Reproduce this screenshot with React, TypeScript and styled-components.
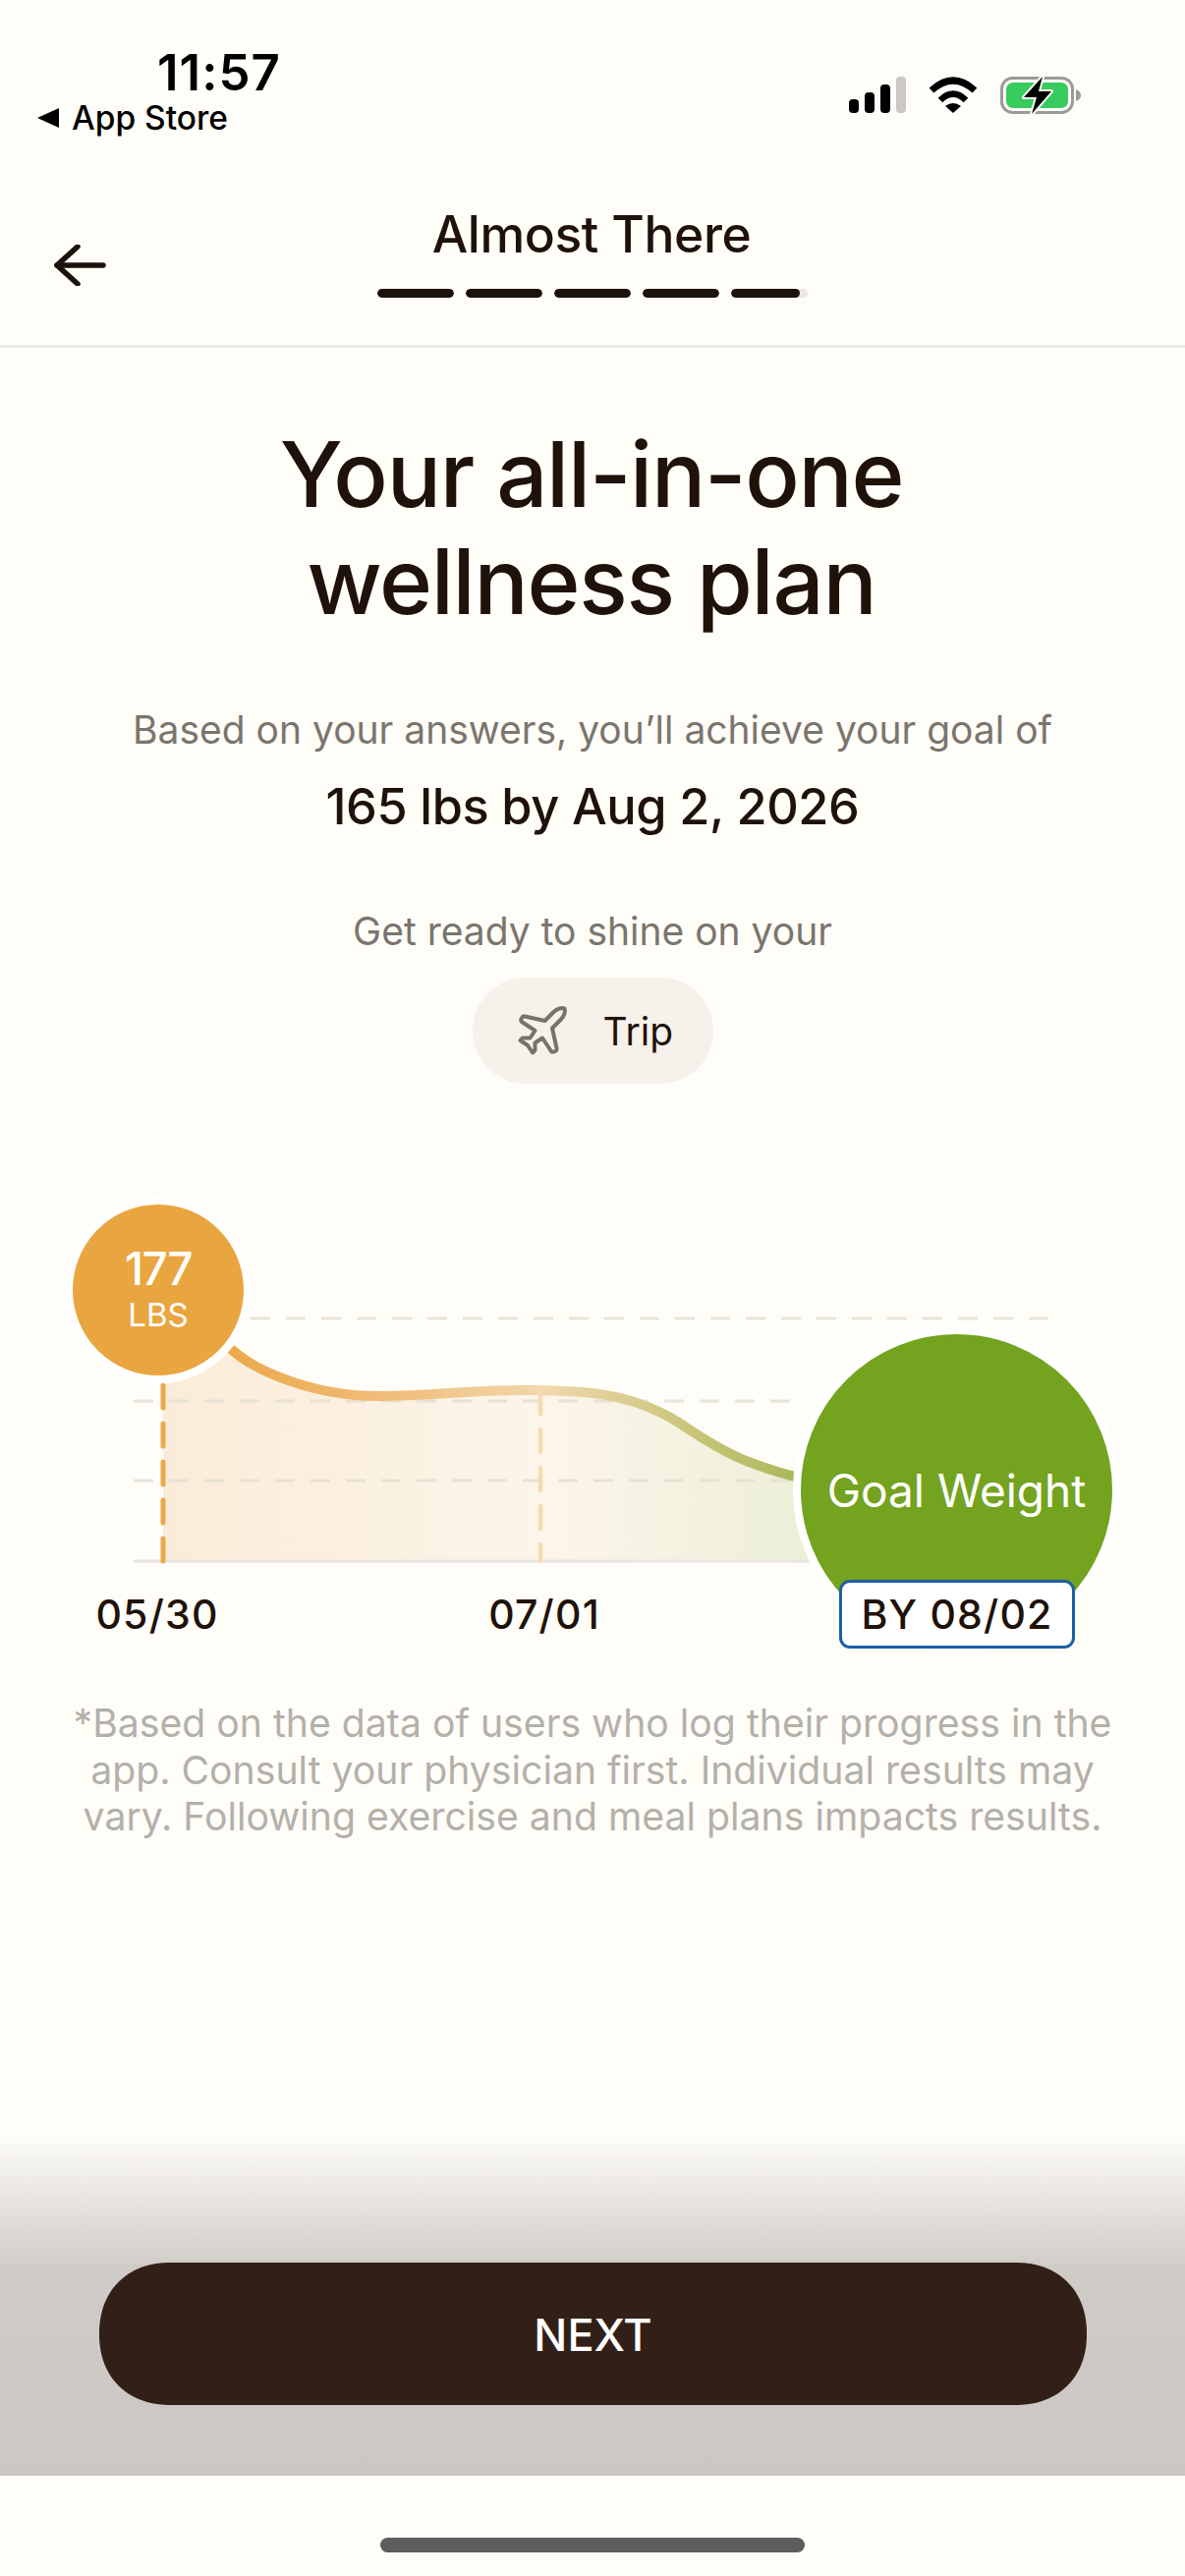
import React from 'react';
import styled, { createGlobalStyle } from 'styled-components';
import { Plane } from 'lucide-react';

const Global = createGlobalStyle`
  html, body { margin: 0; padding: 0; background: #fffdf7; }
  * { box-sizing: border-box; }
`;

const Page = styled.div`
  width: 1206px;
  height: 2622px;
  background: #fffdf7;
  display: flex;
  flex-direction: column;
  overflow: hidden;
  font-family: Inter, "Liberation Sans", sans-serif;
  color: #1f120a;
`;

const StatusBar = styled.div`
  height: 150px;
  padding: 47px 106px 0 38px;
  display: flex;
  justify-content: space-between;
  color: #000;
`;

const StatusLeft = styled.div`
  display: flex;
  flex-direction: column;
`;

const Clock = styled.div`
  margin-left: 122px;
  font-size: 51px;
  line-height: 54px;
  font-weight: 600;
  letter-spacing: 1px;
`;

const BackLink = styled.div`
  display: flex;
  align-items: center;
  gap: 13px;
  font-size: 33.5px;
  line-height: 38px;
  font-weight: 500;
`;

const Triangle = styled.span`
  width: 0;
  height: 0;
  border-top: 10px solid transparent;
  border-bottom: 10px solid transparent;
  border-right: 22px solid #000;
`;

const StatusIcons = styled.div`
  display: flex;
  align-items: flex-start;
  padding-top: 31px;
  gap: 23px;
`;

const NavBar = styled.div`
  height: 204px;
  display: grid;
  grid-template-columns: 180px 1fr 180px;
  border-bottom: 3px solid #ebe9e3;
`;

const BackButton = styled.div`
  padding: 99px 0 0 55px;
`;

const NavCenter = styled.div`
  display: flex;
  flex-direction: column;
  align-items: center;
  padding-top: 58px;
`;

const NavTitle = styled.div`
  font-size: 51.5px;
  line-height: 60px;
  font-weight: 500;
  letter-spacing: -0.4px;
  margin-right: 2px;
`;

const Progress = styled.div`
  margin-top: 26px;
  display: flex;
  gap: 12px;
`;

const Segment = styled.div`
  width: 78px;
  height: 9px;
  border-radius: 5px;
  background: #ece9e3;
  overflow: hidden;
`;

const SegmentFill = styled.div<{ $pct: number }>`
  height: 100%;
  width: ${p => p.$pct}%;
  border-radius: 5px;
  background: #1c110b;
`;

const Main = styled.main`
  padding-top: 74px;
  display: flex;
  flex-direction: column;
  align-items: center;
  text-align: center;
`;

const Heading = styled.h1`
  margin: 0 2px 0 0;
  font-size: 92px;
  line-height: 109px;
  font-weight: 500;
  letter-spacing: -1.3px;
`;

const Muted = styled.p<{ $top: number }>`
  margin: ${p => p.$top}px 0 0;
  font-size: 39px;
  line-height: 50px;
  color: #7a756e;
`;

const GoalLine = styled.p`
  margin: 23px 0 0;
  font-size: 50.5px;
  line-height: 60px;
  font-weight: 500;
  letter-spacing: -0.4px;
`;

const Pill = styled.div`
  margin-top: 22px;
  width: 245px;
  height: 108px;
  border-radius: 54px;
  background: #f6f1ea;
  display: flex;
  align-items: center;
  gap: 32px;
  padding-left: 41px;
  font-size: 39px;
  color: #1f120a;
`;

const Chart = styled.div`
  position: relative;
  margin-top: 123px;
  width: 1206px;
  height: 452px;
`;

const ChartSvg = styled.svg`
  display: block;
  width: 1206px;
  height: 382px;
`;

const Bubble = styled.div<{ $left: number; $top: number; $size: number; $bg: string }>`
  position: absolute;
  left: ${p => p.$left}px;
  top: ${p => p.$top}px;
  width: ${p => p.$size}px;
  height: ${p => p.$size}px;
  border-radius: 50%;
  background: ${p => p.$bg};
  border: 8px solid #fff;
  color: #fff;
  display: flex;
  flex-direction: column;
  align-items: center;
  justify-content: center;
`;

const BubbleValue = styled.div`
  font-size: 46px;
  line-height: 50px;
  font-weight: 500;
  letter-spacing: -1.5px;
`;

const BubbleUnit = styled.div`
  font-size: 33px;
  line-height: 44px;
`;

const BubbleGoal = styled.div`
  font-size: 46px;
  line-height: 56px;
  margin-top: 1px;
  white-space: nowrap;
`;

const DateRow = styled.div`
  position: relative;
  display: grid;
  grid-template-columns: 320px 468px 372px;
  height: 70px;
  align-items: center;
  justify-items: center;
  text-align: center;
`;

const DateLabel = styled.div<{ $boxed?: boolean }>`
  font-size: 41px;
  line-height: 50px;
  font-weight: 500;
  letter-spacing: 1.2px;
  ${p => p.$boxed && `
    width: 240px;
    height: 70px;
    line-height: 64px;
    background: #fff;
    border: 3px solid #1b5fa3;
    border-radius: 11px;
  `}
`;

const Disclaimer = styled.p`
  margin: 52px 0 0;
  width: 1100px;
  font-size: 39.2px;
  line-height: 47.5px;
  color: #b3b0aa;
`;

const Footer = styled.div`
  margin-top: auto;
  height: 350px;
  padding: 133px 100px 0 101px;
  background: linear-gradient(#fffdf7 0, #cfccc7 140px, #cbc8c3 100%);
`;

const NextButton = styled.div`
  height: 145px;
  padding-top: 2px;
  border-radius: 72px;
  corner-shape: superellipse(1.12);
  background: #321f17;
  color: #fff;
  font-size: 45px;
  font-weight: 500;
  display: flex;
  align-items: center;
  justify-content: center;
`;

const HomeArea = styled.div`
  height: 102px;
  padding-top: 63px;
  display: flex;
  justify-content: center;
`;

const HomeBar = styled.div`
  width: 432px;
  height: 15px;
  border-radius: 8px;
  background: #5d5d5d;
`;

const SignalIcon = () => (
  <svg width="58" height="37" viewBox="0 0 58 37">
    <rect x="0" y="23" width="10" height="14" rx="4" fill="#000" />
    <rect x="16" y="16" width="10" height="21" rx="4" fill="#000" />
    <rect x="32" y="8" width="10" height="29" rx="4" fill="#000" />
    <rect x="48" y="0" width="10" height="37" rx="4" fill="#cbc8c3" />
  </svg>
);

const WifiIcon = () => (
  <svg width="50" height="37" viewBox="0 0 50 37" fill="none" stroke="#000">
    <path d="M3 14 Q25 -6 47 14" strokeWidth="7" />
    <path d="M12 24 Q25 11 38 24" strokeWidth="6.5" />
    <path d="M17 30 Q25 24 33 30 L25 37 Z" fill="#000" stroke="none" />
  </svg>
);

const BatteryIcon = () => (
  <svg width="82" height="38" viewBox="0 0 82 38">
    <rect x="1.5" y="1.5" width="72" height="35" rx="11" fill="none" stroke="#9c9a96" strokeWidth="3" />
    <rect x="6" y="6" width="63" height="26" rx="7" fill="#36cb5c" />
    <path d="M77 13 Q82 15 82 19 Q82 23 77 25 Z" fill="#9c9a96" />
    <path
      d="M43 0 L24 21 L37 21 L32 38 L52 15 L39 15 Z"
      fill="#000"
      stroke="#fffdf7"
      strokeWidth="4"
      paintOrder="stroke"
      strokeLinejoin="round"
    />
  </svg>
);

const BackArrow = () => (
  <svg width="53" height="42" viewBox="0 0 53 42" fill="none" stroke="#1c110b" strokeWidth="5.5" strokeLinecap="round" strokeLinejoin="round">
    <path d="M50 21 H3" />
    <path d="M24 2 L3 21 L24 40" />
  </svg>
);

const curve = 'M235 147 C260 170 320 195 385 195 C440 195 490 188 538 189 C590 190 630 190 677 214 C710 231 735 262 830 282';
const area = `M166 183 C190 180 215 170 235 147 C260 170 320 195 385 195 C440 195 490 188 538 189 C590 190 630 190 677 214 C710 231 735 262 830 282 L830 363 L166 363 Z`;

const GrowthChart = () => (
  <ChartSvg viewBox="0 0 1206 382" fill="none">
    <defs>
      <linearGradient id="fillGrad" gradientUnits="userSpaceOnUse" x1="166" y1="0" x2="830" y2="0">
        <stop offset="0" stopColor="#faecd8" />
        <stop offset="0.6" stopColor="#fcf5ea" />
        <stop offset="1" stopColor="#ecefd8" />
      </linearGradient>
      <linearGradient id="lineGrad" gradientUnits="userSpaceOnUse" x1="235" y1="0" x2="815" y2="0">
        <stop offset="0" stopColor="#eba94a" />
        <stop offset="0.25" stopColor="#f0bb76" />
        <stop offset="0.55" stopColor="#f1d7ab" />
        <stop offset="1" stopColor="#aab858" />
      </linearGradient>
    </defs>
    <path d={area} fill="url(#fillGrad)" />
    <g stroke="#e4e0d2" strokeWidth="3" strokeDasharray="20 16" opacity="0.85">
      <path d="M255 116 H1071" />
      <path d="M136 200 H815" />
      <path d="M136 281 H815" />
    </g>
    <path d="M136 363 H830" stroke="#e8e5df" strokeWidth="3" />
    <path d={curve} stroke="url(#lineGrad)" strokeWidth="10" />
    <path d="M166 184 V363" stroke="#eba94a" strokeWidth="5" strokeLinecap="round" strokeDasharray="23 16" />
    <path d="M550 190 V363" stroke="#f4dcae" strokeWidth="4.5" strokeLinecap="round" strokeDasharray="23 16" />
  </ChartSvg>
);

export default function App() {
  return (
    <Page>
      <Global />
      <StatusBar>
        <StatusLeft>
          <Clock>11:57</Clock>
          <BackLink><Triangle />App Store</BackLink>
        </StatusLeft>
        <StatusIcons>
          <SignalIcon />
          <WifiIcon />
          <BatteryIcon />
        </StatusIcons>
      </StatusBar>
      <NavBar>
        <BackButton><BackArrow /></BackButton>
        <NavCenter>
          <NavTitle>Almost There</NavTitle>
          <Progress>
            {[100, 100, 100, 100, 90].map((pct, i) => (
              <Segment key={i}><SegmentFill $pct={pct} /></Segment>
            ))}
          </Progress>
        </NavCenter>
      </NavBar>
      <Main>
        <Heading>Your all-in-one<br />wellness plan</Heading>
        <Muted $top={72}>Based on your answers, you’ll achieve your goal of</Muted>
        <GoalLine>165 lbs by Aug 2, 2026</GoalLine>
        <Muted $top={72}>Get ready to shine on your</Muted>
        <Pill>
          <Plane size={60} color="#77726b" strokeWidth={1.6} />
          <span>Trip</span>
        </Pill>
        <Chart>
          <GrowthChart />
          <Bubble $left={66} $top={-8} $size={190} $bg="#e9a53f">
            <BubbleValue>177</BubbleValue>
            <BubbleUnit>LBS</BubbleUnit>
          </Bubble>
          <Bubble $left={807} $top={124} $size={333} $bg="#74a31f">
            <BubbleGoal>Goal Weight</BubbleGoal>
          </Bubble>
          <DateRow>
            <DateLabel>05/30</DateLabel>
            <DateLabel>07/01</DateLabel>
            <DateLabel $boxed>BY 08/02</DateLabel>
          </DateRow>
        </Chart>
        <Disclaimer>
          *Based on the data of users who log their progress in the app. Consult your physician first. Individual results may vary. Following exercise and meal plans impacts results.
        </Disclaimer>
      </Main>
      <Footer>
        <NextButton>NEXT</NextButton>
      </Footer>
      <HomeArea><HomeBar /></HomeArea>
    </Page>
  );
}
